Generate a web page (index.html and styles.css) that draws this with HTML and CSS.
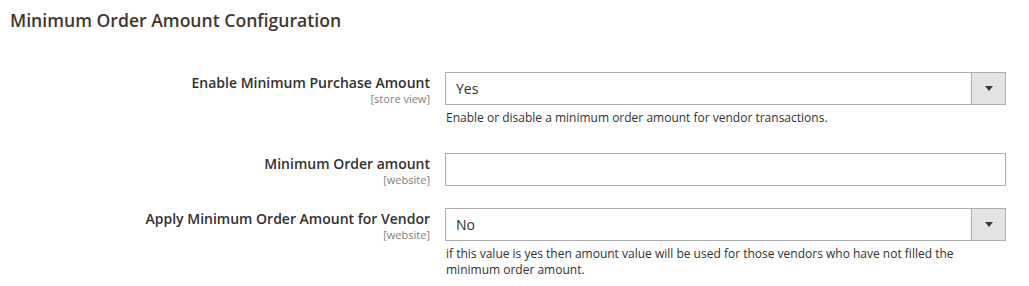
FILE: index.html
```html
<!DOCTYPE html>
<html lang="en">
<head>
    <meta charset="UTF-8">
    <title>Minimum Order Amount Configuration</title>
    <link rel="stylesheet" href="styles.css">
</head>
<body>
    <div class="section-config">
        <h2 class="section-title">Minimum Order Amount Configuration</h2>

        <div class="config-rows">
            <!-- Enable minimum purchase -->
            <div class="config-row">
                <div class="label-col">
                    <span class="field-label">Enable Minimum Purchase Amount</span>
                    <span class="field-scope">[store view]</span>
                </div>
                <div class="value-col">
                    <div class="select-box">
                        <span class="select-value">Yes</span>
                        <span class="select-arrow"><span class="arrow-down"></span></span>
                    </div>
                    <p class="field-note">Enable or disable a minimum order amount for vendor transactions.</p>
                </div>
            </div>

            <!-- Minimum amount -->
            <div class="config-row">
                <div class="label-col">
                    <span class="field-label">Minimum Order amount</span>
                    <span class="field-scope">[website]</span>
                </div>
                <div class="value-col">
                    <input type="text" class="text-input">
                </div>
            </div>

            <!-- Apply for vendor -->
            <div class="config-row">
                <div class="label-col">
                    <span class="field-label">Apply Minimum Order Amount for Vendor</span>
                    <span class="field-scope">[website]</span>
                </div>
                <div class="value-col">
                    <div class="select-box">
                        <span class="select-value">No</span>
                        <span class="select-arrow"><span class="arrow-down"></span></span>
                    </div>
                    <p class="field-note">if this value is yes then amount value will be used for those vendors who have not filled the minimum order amount.</p>
                </div>
            </div>
        </div>
    </div>
</body>
</html>
```

FILE: styles.css
```css
body {
    font-family: "Open Sans", Arial, sans-serif;
    background-color: #fff;
    color: #303030;
    margin: 0;
}

.section-config {
    padding: 9px 0 0 10px;
}

.section-title {
    font-size: 17.6px;
    font-weight: 600;
    color: #41362f;
    margin: 0;
    line-height: 22px;
}

.config-rows {
    margin-top: 41px;
}

.config-row {
    display: grid;
    grid-template-columns: 420px 561px;
    column-gap: 15px;
    padding-bottom: 22px;
}

.config-row:first-child {
    padding-bottom: 27px;
}

.label-col {
    display: flex;
    flex-direction: column;
    align-items: flex-end;
    padding-top: 1px;
}

.field-label {
    font-size: 14px;
    font-weight: 600;
    line-height: 19px;
}

.field-scope {
    font-size: 11px;
    color: #808080;
    line-height: 13px;
}

.select-box {
    display: flex;
    height: 33px;
    border: 1px solid #adadad;
    box-sizing: border-box;
    background-color: #fff;
}

.select-value {
    flex: 1;
    font-size: 14px;
    line-height: 31px;
    padding-left: 10px;
}

.select-arrow {
    width: 33px;
    border-left: 1px solid #adadad;
    background-color: #e3e3e3;
    display: flex;
    align-items: center;
    justify-content: center;
}

.arrow-down {
    width: 0;
    height: 0;
    border-left: 4px solid transparent;
    border-right: 4px solid transparent;
    border-top: 5px solid #41362f;
}

.text-input {
    display: block;
    width: 100%;
    height: 33px;
    box-sizing: border-box;
    border: 1px solid #adadad;
    border-radius: 0;
    padding: 0 10px;
    font-family: inherit;
    font-size: 14px;
}

.field-note {
    font-size: 12px;
    line-height: 16px;
    margin: 5px 0 0;
    padding-left: 1px;
}
```
